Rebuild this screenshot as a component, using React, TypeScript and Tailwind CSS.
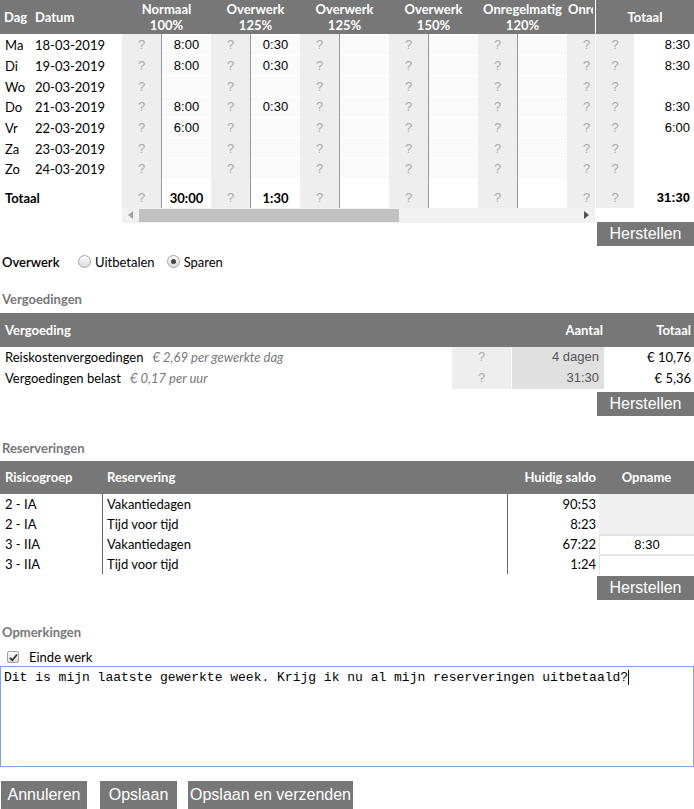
import React from "react";

const days = [
  ["Ma", "18-03-2019", "8:00", "0:30", "8:30"],
  ["Di", "19-03-2019", "8:00", "0:30", "8:30"],
  ["Wo", "20-03-2019", "", "", ""],
  ["Do", "21-03-2019", "8:00", "0:30", "8:30"],
  ["Vr", "22-03-2019", "6:00", "", "6:00"],
  ["Za", "23-03-2019", "", "", ""],
  ["Zo", "24-03-2019", "", "", ""],
];

const heads = [
  ["Normaal", "100%"],
  ["Overwerk", "125%"],
  ["Overwerk", "125%"],
  ["Overwerk", "150%"],
  ["Onregelmatig", "120%"],
];

const reserveringen = [
  ["2 - IA", "Vakantiedagen", "90:53", null],
  ["2 - IA", "Tijd voor tijd", "8:23", null],
  ["3 - IIA", "Vakantiedagen", "67:22", "8:30"],
  ["3 - IIA", "Tijd voor tijd", "1:24", ""],
];

const arial = "[font-family:'Liberation_Sans',Arial,sans-serif]";

function Pair({ value }: { value: string }) {
  return (
    <div className="flex w-[89px] h-full">
      <div className={`w-[39px] bg-[#eee] text-[#aaa] flex items-center justify-center ${arial}`}>?</div>
      <div className="w-[50px] border-l border-[#999] flex">
        <div className={`flex-1 bg-[#fafafa] mb-px flex items-center justify-center ${arial}`}>{value}</div>
      </div>
    </div>
  );
}

function Herstellen() {
  return (
    <div className="flex justify-end">
      <button className={`w-[97px] h-[24px] bg-[#777] text-white text-[16px] leading-[24px] ${arial}`}>
        Herstellen
      </button>
    </div>
  );
}

function Radio({ checked }: { checked?: boolean }) {
  return (
    <span className="w-[13px] h-[13px] rounded-full border border-[#a3a3a3] bg-linear-to-b from-[#fbfbfb] to-[#dadada] flex items-center justify-center">
      {checked && <span className="w-[5px] h-[5px] rounded-full bg-[#444]" />}
    </span>
  );
}

export default function App() {
  const mono = "[font-family:'Liberation_Mono','DejaVu_Sans_Mono',monospace]";

  return (
    <div className="w-[694px] bg-white text-[13px] leading-[16px] text-black [font-family:Lato,sans-serif]">
      {/* Uren */}
      <div className="flex">
        <div className="w-[122px]">
          <div className="h-[34px] mb-px bg-[#777] text-white font-bold flex items-center">
            <span className="pl-[4px] w-[35px]">Dag</span>
            <span>Datum</span>
          </div>
          {days.map((d) => (
            <div key={d[1]} className="h-[20.7px] flex items-center">
              <span className="pl-[5px] w-[35px]">{d[0]}</span>
              <span>{d[1]}</span>
            </div>
          ))}
          <div className="h-[28px] flex items-end pb-[2px] pl-[5px] font-bold">Totaal</div>
        </div>

        <div className="w-[473px] overflow-hidden">
          <div className="w-max">
            <div className="h-[34px] bg-[#777] text-white font-bold flex">
              {heads.map((h, i) => (
                <div key={i} className="w-[89px] flex flex-col items-center justify-center">
                  <span>{h[0]}</span>
                  <span>{h[1]}</span>
                </div>
              ))}
              <div className="w-[26px] flex flex-col justify-center pl-px">
                <span className="block w-[25px] overflow-hidden whitespace-nowrap">Onregelmatig</span>
                <span>&nbsp;</span>
              </div>
            </div>
            <div className="h-px flex">
              {[0, 1, 2, 3, 4, 5].map((i) => (
                <div key={i} className="w-[89px] flex">
                  <div className="w-[39px] bg-[#eee]" />
                  <div className="w-[50px] border-l border-[#999]" />
                </div>
              ))}
            </div>
            {days.map((d) => (
              <div key={d[1]} className="h-[20.7px] flex items-center">
                <Pair value={d[2]} />
                <Pair value={d[3]} />
                <Pair value="" />
                <Pair value="" />
                <Pair value="" />
                <Pair value="" />
              </div>
            ))}
            <div className="h-[28px] flex">
              {["30:00", "1:30", "", "", "", ""].map((v, i) => (
                <div key={i} className="h-full flex w-[89px]">
                  <div className={`w-[39px] bg-[#eee] text-[#aaa] h-full flex items-end justify-center pb-[2px] ${arial}`}>?</div>
                  <div className="w-[50px] border-l border-[#999] h-full flex items-end justify-center pb-[2px] font-bold">{v}</div>
                </div>
              ))}
            </div>
          </div>
          {/* scrollbar */}
          <div className="h-[15px] bg-[#f1f1f1] flex items-center">
            <div className="w-[17px] flex justify-center">
              <svg width="5" height="8" viewBox="0 0 5 8">
                <path d="M5 0 L0 4 L5 8 Z" fill="#a3a3a3" />
              </svg>
            </div>
            <div className="w-[260px] h-[13px] bg-[#c1c1c1]" />
            <div className="flex-1" />
            <div className="w-[17px] flex justify-center">
              <svg width="5" height="8" viewBox="0 0 5 8">
                <path d="M0 0 L5 4 L0 8 Z" fill="#505050" />
              </svg>
            </div>
          </div>
        </div>

        <div className="w-px" />

        <div className="w-[98px]">
          <div className="h-[34px] bg-[#777] text-white font-bold flex items-center justify-center">Totaal</div>
          <div className="h-px flex">
            <div className="w-[38px] bg-[#eee]" />
          </div>
          {days.map((d) => (
            <div key={d[1]} className="h-[20.7px] flex items-center">
              <div className={`w-[38px] h-full flex items-center justify-center bg-[#eee] text-[#aaa] ${arial}`}>?</div>
              <div className={`flex-1 text-right pr-[4px] ${arial}`}>{d[4]}</div>
            </div>
          ))}
          <div className="h-[28px] flex">
            <div className={`w-[38px] h-full flex items-end justify-center pb-[2px] bg-[#eee] text-[#aaa] ${arial}`}>?</div>
            <div className={`flex-1 flex items-end justify-end pb-[2px] pr-[4px] font-bold ${arial}`}>31:30</div>
          </div>
        </div>
      </div>
      <div className="-mt-px">
        <Herstellen />
      </div>

      {/* Overwerk */}
      <div className="mt-[6px] h-[20px] flex items-center">
        <span className="w-[78px] pl-[2px] font-semibold">Overwerk</span>
        <Radio />
        <span className="ml-[4px]">Uitbetalen</span>
        <span className="ml-[12px]">
          <Radio checked />
        </span>
        <span className="ml-[4px]">Sparen</span>
      </div>

      {/* Vergoedingen */}
      <div className="mt-[19px] pl-[2px] text-[#777] font-bold">Vergoedingen</div>
      <div className="mt-[6px]">
        <div className="h-[34px] bg-[#777] text-white font-bold flex items-center">
          <span className="flex-1 pl-[5px]">Vergoeding</span>
          <span className="w-[152px] text-right pr-px">Aantal</span>
          <span className="w-[90px] text-right pr-[3px]">Totaal</span>
        </div>
        {[
          ["Reiskostenvergoedingen", "€ 2,69 per gewerkte dag", "4 dagen", "€ 10,76"],
          ["Vergoedingen belast", "€ 0,17 per uur", "31:30", "€ 5,36"],
        ].map((r) => (
          <div key={r[0]} className="h-[21px] flex items-center">
            <div className="flex-1 pl-[5px]">
              {r[0]}
              <span className="ml-[9px] italic text-[#777]">{r[1]}</span>
            </div>
            <div className={`w-[59px] h-full flex items-center justify-center bg-[#eee] text-[#aaa] ${arial}`}>?</div>
            <div className="w-px h-full" />
            <div className={`w-[92px] h-full flex items-center justify-end pr-[5px] bg-[#e0e0e0] text-[#555] ${arial}`}>{r[2]}</div>
            <div className="w-[90px] text-right pr-[3px]">{r[3]}</div>
          </div>
        ))}
      </div>
      <div className="mt-[3px]">
        <Herstellen />
      </div>

      {/* Reserveringen */}
      <div className="mt-[24px] pl-[2px] text-[#777] font-bold">Reserveringen</div>
      <div className="mt-[5px]">
        <div className="h-[33px] bg-[#777] text-white font-bold flex items-center">
          <span className="w-[102px] pl-[5px]">Risicogroep</span>
          <span className="w-[405px] pl-[5px]">Reservering</span>
          <span className="w-[92px] text-right pr-[3px]">Huidig saldo</span>
          <span className="flex-1 text-center">Opname</span>
        </div>
        {reserveringen.map((r, i) => (
          <div key={i} className="h-[20px] flex">
            <div className="w-[102px] pl-[5px] flex items-center">{r[0]}</div>
            <div className="w-[405px] border-l border-[#666] pl-[4px] flex items-center">{r[1]}</div>
            <div className="w-[92px] border-l border-[#666] pr-[3px] flex items-center justify-end">{r[2]}</div>
            {r[3] === null ? (
              <div className="flex-1 bg-[#f0f0f0]" />
            ) : (
              <div className={`flex-1 bg-white border-t-2 border-l border-[#e3e3e3] flex items-center justify-center ${arial}`}>{r[3]}</div>
            )}
          </div>
        ))}
      </div>
      <div className="mt-[2px]">
        <Herstellen />
      </div>

      {/* Opmerkingen */}
      <div className="mt-[24px] pl-[2px] text-[#777] font-bold">Opmerkingen</div>
      <div className="mt-[9px] h-[17px] flex items-center">
        <span className="ml-[7px] w-[12px] h-[12px] border border-[#a3a3a3] rounded-[2px] bg-linear-to-b from-[#fbfbfb] to-[#dadada] flex items-center justify-center">
          <svg width="9" height="9" viewBox="0 0 9 9">
            <path d="M1 4.8 L3.4 7.2 L8 1.5" stroke="#333" strokeWidth="1.8" fill="none" />
          </svg>
        </span>
        <span className="ml-[10px]">Einde werk</span>
      </div>
      <div className={`h-[101px] border border-[#7ea6e0] px-[3px] pt-[3px] text-[13px] leading-[16px] ${mono}`}>
        Dit is mijn laatste gewerkte week. Krijg ik nu al mijn reserveringen uitbetaald?
        <span className="inline-block w-px h-[15px] bg-black align-middle" />
      </div>

      <div className={`mt-[14px] flex h-[28px] text-white text-[16px] leading-[28px] ${arial}`}>
        <button className="ml-px w-[86px] h-full bg-[#777] text-center">Annuleren</button>
        <button className="ml-[13px] w-[77px] h-full bg-[#777] text-center">Opslaan</button>
        <button className="ml-[11px] w-[165px] h-full bg-[#777] text-left pl-[2px] overflow-hidden whitespace-nowrap">
          Opslaan en verzenden
        </button>
      </div>
    </div>
  );
}
